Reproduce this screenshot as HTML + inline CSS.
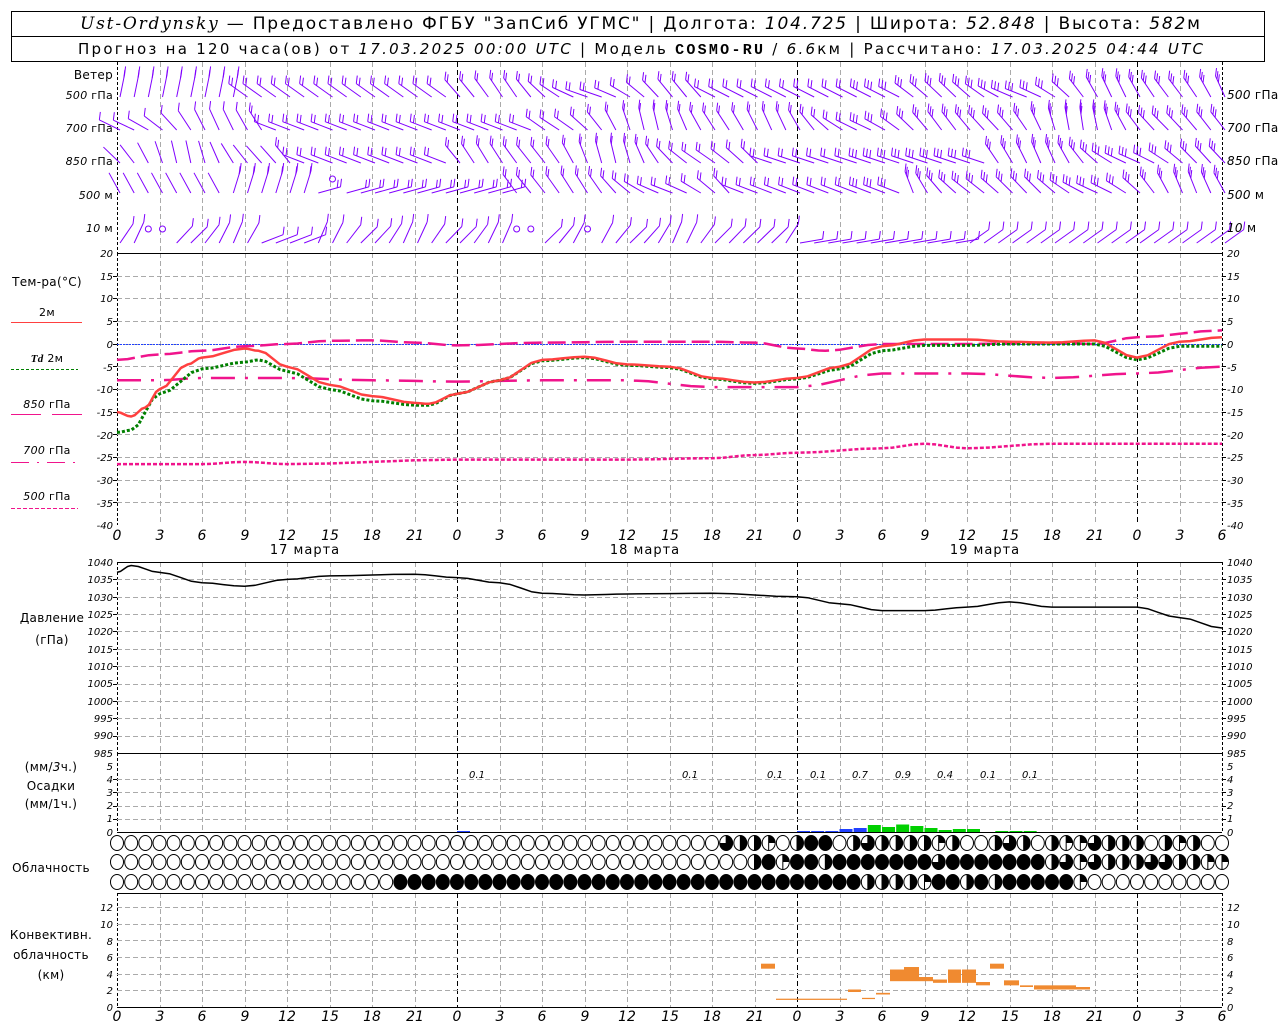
<!DOCTYPE html>
<html><head><meta charset="utf-8"><style>
html,body{margin:0;padding:0;background:#fff;}
svg{display:block;}
text{font-family:"DejaVu Sans","Liberation Sans",sans-serif;fill:#000;}
.ax{font-size:10px;font-style:italic;font-family:"DejaVu Sans","Liberation Sans",sans-serif;}
.lb{font-size:12px;letter-spacing:0.3px;}
.hr{font-size:14px;font-style:italic;font-family:"DejaVu Sans","Liberation Sans",sans-serif;}
</style></head><body>
<svg id="s" width="1280" height="1024" viewBox="0 0 1280 1024" xmlns="http://www.w3.org/2000/svg">
<g id="grid"></g>
<g id="data"></g>
<rect x="11.5" y="11.5" width="1253" height="50" fill="none" stroke="#000"/>
<line x1="11" y1="36.5" x2="1265" y2="36.5" stroke="#000"/>
<text x="80" y="29" font-size="17" textLength="1120" lengthAdjust="spacing"><tspan font-style="italic" font-family="DejaVu Serif,Liberation Serif,serif">Ust-Ordynsky</tspan> — Предоставлено ФГБУ "ЗапСиб УГМС" | Долгота: <tspan font-style="italic">104.725</tspan> | Широта: <tspan font-style="italic">52.848</tspan> | Высота: <tspan font-style="italic">582</tspan>м</text>
<text x="78" y="54" font-size="15" textLength="1125" lengthAdjust="spacing">Прогноз на 120 часа(ов) от <tspan font-style="italic">17.03.2025 00:00 UTC</tspan> | Модель <tspan font-weight="bold" font-family="Liberation Mono,monospace">COSMO-RU</tspan> / <tspan font-style="italic">6.6</tspan>км | Рассчитано: <tspan font-style="italic">17.03.2025 04:44 UTC</tspan></text>

<g class="lb" text-anchor="end">
<text x="113" y="79">Ветер</text>
<text x="113" y="99" font-size="11"><tspan font-style="italic">500</tspan> гПа</text>
<text x="113" y="132" font-size="11"><tspan font-style="italic">700</tspan> гПа</text>
<text x="113" y="165" font-size="11"><tspan font-style="italic">850</tspan> гПа</text>
<text x="113" y="199" font-size="11"><tspan font-style="italic">500</tspan> м</text>
<text x="113" y="232" font-size="11"><tspan font-style="italic">10</tspan>   м</text>
</g>
<g class="lb" font-size="11">
<text x="1227" y="99"><tspan font-style="italic">500</tspan> гПа</text>
<text x="1227" y="132"><tspan font-style="italic">700</tspan> гПа</text>
<text x="1227" y="165"><tspan font-style="italic">850</tspan> гПа</text>
<text x="1227" y="199"><tspan font-style="italic">500</tspan> м</text>
<text x="1227" y="232"><tspan font-style="italic">10</tspan>   м</text>
</g>
<g class="lb" text-anchor="middle">
<text x="47" y="286">Тем-ра(°С)</text>
<text x="47" y="316" font-size="11">2м</text>
<text x="47" y="362" font-size="11"><tspan font-style="italic" font-weight="bold" font-family="Liberation Serif,serif">Td</tspan>  2м</text>
<text x="47" y="408" font-size="11"><tspan font-style="italic">850</tspan> гПа</text>
<text x="47" y="454" font-size="11"><tspan font-style="italic">700</tspan> гПа</text>
<text x="47" y="500" font-size="11"><tspan font-style="italic">500</tspan> гПа</text>
<text x="52" y="622">Давление</text>
<text x="52" y="644">(гПа)</text>
<text x="51" y="771">(мм/<tspan font-style="italic">3</tspan>ч.)</text>
<text x="51" y="790">Осадки</text>
<text x="51" y="808">(мм/1ч.)</text>
<text x="51" y="872">Облачность</text>
<text x="51" y="939">Конвективн.</text>
<text x="51" y="959">облачность</text>
<text x="51" y="979">(км)</text>
</g>
<line x1="11" y1="322.5" x2="82" y2="322.5" stroke="#ff4040"/>
<line x1="11" y1="369.5" x2="78" y2="369.5" stroke="#008000" stroke-dasharray="3,2"/>
<line x1="11" y1="414.5" x2="41" y2="414.5" stroke="#f0148c"/><line x1="52" y1="414.5" x2="82" y2="414.5" stroke="#f0148c"/>
<line x1="11" y1="462.5" x2="78" y2="462.5" stroke="#f0148c" stroke-dasharray="18,8,2,8"/>
<line x1="11" y1="508.5" x2="78" y2="508.5" stroke="#f0148c" stroke-dasharray="4,2"/>

<g class="ax" text-anchor="end">
<text x="113" y="257">20</text><text x="113" y="280">15</text><text x="113" y="302">10</text><text x="113" y="325">5</text><text x="113" y="348">0</text><text x="113" y="371">-5</text><text x="113" y="393">-10</text><text x="113" y="416">-15</text><text x="113" y="439">-20</text><text x="113" y="461">-25</text><text x="113" y="484">-30</text><text x="113" y="507">-35</text><text x="113" y="529">-40</text>
<text x="113" y="566">1040</text><text x="113" y="583">1035</text><text x="113" y="601">1030</text><text x="113" y="618">1025</text><text x="113" y="635">1020</text><text x="113" y="653">1015</text><text x="113" y="670">1010</text><text x="113" y="687">1005</text><text x="113" y="705">1000</text><text x="113" y="722">995</text><text x="113" y="739">990</text><text x="113" y="757">985</text>
<text x="113" y="770">5</text><text x="113" y="783">4</text><text x="113" y="796">3</text><text x="113" y="809">2</text><text x="113" y="822">1</text><text x="113" y="836">0</text>
<text x="113" y="911">12</text><text x="113" y="928">10</text><text x="113" y="945">8</text><text x="113" y="961">6</text><text x="113" y="978">4</text><text x="113" y="994">2</text><text x="113" y="1011">0</text>
</g>
<g class="ax">
<text x="1227" y="257">20</text><text x="1227" y="280">15</text><text x="1227" y="302">10</text><text x="1227" y="325">5</text><text x="1227" y="348">0</text><text x="1227" y="371">-5</text><text x="1227" y="393">-10</text><text x="1227" y="416">-15</text><text x="1227" y="439">-20</text><text x="1227" y="461">-25</text><text x="1227" y="484">-30</text><text x="1227" y="507">-35</text><text x="1227" y="529">-40</text>
<text x="1227" y="566">1040</text><text x="1227" y="583">1035</text><text x="1227" y="601">1030</text><text x="1227" y="618">1025</text><text x="1227" y="635">1020</text><text x="1227" y="653">1015</text><text x="1227" y="670">1010</text><text x="1227" y="687">1005</text><text x="1227" y="705">1000</text><text x="1227" y="722">995</text><text x="1227" y="739">990</text><text x="1227" y="757">985</text>
<text x="1227" y="770">5</text><text x="1227" y="783">4</text><text x="1227" y="796">3</text><text x="1227" y="809">2</text><text x="1227" y="822">1</text><text x="1227" y="836">0</text>
<text x="1227" y="911">12</text><text x="1227" y="928">10</text><text x="1227" y="945">8</text><text x="1227" y="961">6</text><text x="1227" y="978">4</text><text x="1227" y="994">2</text><text x="1227" y="1011">0</text>
</g>
<g class="hr" text-anchor="middle">
<text x="117" y="540">0</text><text x="160" y="540">3</text><text x="202" y="540">6</text><text x="245" y="540">9</text><text x="287" y="540">12</text><text x="330" y="540">15</text><text x="372" y="540">18</text><text x="415" y="540">21</text><text x="457" y="540">0</text><text x="500" y="540">3</text><text x="542" y="540">6</text><text x="585" y="540">9</text><text x="627" y="540">12</text><text x="670" y="540">15</text><text x="712" y="540">18</text><text x="755" y="540">21</text><text x="797" y="540">0</text><text x="840" y="540">3</text><text x="882" y="540">6</text><text x="925" y="540">9</text><text x="967" y="540">12</text><text x="1010" y="540">15</text><text x="1052" y="540">18</text><text x="1095" y="540">21</text><text x="1137" y="540">0</text><text x="1180" y="540">3</text><text x="1222" y="540">6</text>
<text x="117" y="1021">0</text><text x="160" y="1021">3</text><text x="202" y="1021">6</text><text x="245" y="1021">9</text><text x="287" y="1021">12</text><text x="330" y="1021">15</text><text x="372" y="1021">18</text><text x="415" y="1021">21</text><text x="457" y="1021">0</text><text x="500" y="1021">3</text><text x="542" y="1021">6</text><text x="585" y="1021">9</text><text x="627" y="1021">12</text><text x="670" y="1021">15</text><text x="712" y="1021">18</text><text x="755" y="1021">21</text><text x="797" y="1021">0</text><text x="840" y="1021">3</text><text x="882" y="1021">6</text><text x="925" y="1021">9</text><text x="967" y="1021">12</text><text x="1010" y="1021">15</text><text x="1052" y="1021">18</text><text x="1095" y="1021">21</text><text x="1137" y="1021">0</text><text x="1180" y="1021">3</text><text x="1222" y="1021">6</text>
</g>
<g font-size="13" text-anchor="middle" letter-spacing="1">
<text x="305" y="554">17 марта</text><text x="645" y="554">18 марта</text><text x="985" y="554">19 марта</text>
</g>
<g class="ax" font-size="12" text-anchor="middle">
<text x="477" y="778">0.1</text><text x="690" y="778">0.1</text><text x="775" y="778">0.1</text><text x="818" y="778">0.1</text><text x="860" y="778">0.7</text><text x="903" y="778">0.9</text><text x="945" y="778">0.4</text><text x="988" y="778">0.1</text><text x="1030" y="778">0.1</text>
</g>
</svg>
<script>
(function(){
var NS="http://www.w3.org/2000/svg",G=document.getElementById('grid'),D=document.getElementById('data');
function X(h){return 117+h*340/24;}
function el(p,t,a){var e=document.createElementNS(NS,t);for(var k in a)e.setAttribute(k,a[k]);p.appendChild(e);return e;}
function ln(p,x1,y1,x2,y2,c,da,w){var a={x1:x1,y1:y1,x2:x2,y2:y2,stroke:c,'stroke-width':w||1};if(da)a['stroke-dasharray']=da;return el(p,'line',a);}
var P=[[62,253],[253,525],[562,753],[753,832],[893,1007]];
P.forEach(function(p){
 for(var h=3;h<78;h+=3){var x=Math.round(X(h))+.5;ln(G,x,p[0],x,p[1],h%24?'#aaa':'#000','5,3');}
 ln(G,117.5,p[0],117.5,p[1],'#000','3,2');ln(G,1222.5,p[0],1222.5,p[1],'#000','3,2');
});
function hg(top,bot,n){for(var i=1;i<n;i++){var y=Math.round(top+(bot-top)*i/n)+.5;ln(G,117,y,1222,y,'#aaa','5,3');ln(G,113,y,117,y,'#000');ln(G,1222,y,1226,y,'#000');}}
hg(253,525,12);hg(562,753,11);hg(766,832,5);
for(var k=1;k<=6;k++){var y=Math.round(1007-k*16.67)+.5;ln(G,117,y,1222,y,'#aaa','5,3');}
[253,562,753,832,893,1007].forEach(function(y){ln(G,117,y+.5,1222,y+.5,'#000');});
ln(G,117,344.5,1222,344.5,'#2040ff','2,1');
function curve(pts,f,c,w,da){var d='';pts.forEach(function(p,i){d+=(i?'L':'M')+X(p[0]).toFixed(1)+','+f(p[1]).toFixed(1);});var a={d:d,fill:'none',stroke:c,'stroke-width':w,'stroke-linejoin':'round'};if(da)a['stroke-dasharray']=da;el(D,'path',a);}
function interp(k){var o=[];for(var i=0;i<k.length-1;i++){var a=k[i],b=k[i+1];for(var t=0;t<1;t+=.25){var s=(1-Math.cos(Math.PI*t))/2;o.push([a[0]+(b[0]-a[0])*t,a[1]+(b[1]-a[1])*s]);}}o.push(k[k.length-1]);return o;}
function TY(v){return 344-v*4.533;}
function PY(v){return 562+(1040-v)*3.473;}
curve(interp([[0,-26.5],[6,-26.5],[9,-26],[12,-26.5],[24,-25.5],[36,-25.5],[42,-25.2],[45,-24.5],[48,-24],[54,-23],[57,-22],[60,-23],[66,-22],[72,-22],[78,-22]]),TY,'#f0148c',2.5,'4,2');
curve(interp([[0,-8],[3,-8],[6,-7.5],[12,-7.5],[18,-8],[24,-8.3],[30,-8],[36,-8],[42,-9.5],[48,-9.5],[54,-6.5],[60,-6.5],[66,-7.5],[72,-6.5],[78,-5]]),TY,'#f0148c',2.5,'24,10,3,10');
curve(interp([[0,-3.5],[3,-2.3],[6,-1.5],[9,-0.5],[12,0],[15,0.7],[18,0.8],[21,0.3],[24,-0.3],[30,0.3],[36,0.5],[42,0.5],[45,0.3],[48,-1],[50,-1.5],[54,0],[60,0],[66,0.3],[69,0],[72,1.5],[78,3]]),TY,'#f0148c',2.5,'18,6');
curve(interp([[0,-19.5],[1,-19],[3,-11],[6,-5.5],[9,-4],[10,-3.5],[12,-6],[15,-10],[18,-12.5],[21,-13.5],[22,-13.5],[24,-11],[27,-8],[30,-3.7],[33,-3],[36,-4.7],[39,-5.2],[42,-7.7],[45,-8.7],[48,-7.7],[51,-5.5],[54,-1.5],[57,-0.3],[60,-0.3],[63,0],[66,0],[69,0],[72,-3.5],[75,-0.5],[78,-0.5]]),TY,'#008000',3,'3,2');
curve(interp([[0,-15],[1,-16],[2,-14],[3,-10],[5,-4.5],[6,-3],[9,-1],[10,-1.5],[12,-5],[15,-9],[18,-11.5],[21,-13],[22,-13.2],[24,-11],[27,-8],[30,-3.5],[33,-2.8],[36,-4.5],[39,-5],[42,-7.5],[45,-8.5],[48,-7.5],[51,-5],[54,-0.5],[57,1],[60,1],[63,0.5],[66,0.3],[69,0.8],[72,-3],[75,0.5],[78,1.5]]),TY,'#ff4040',2.5);
curve(interp([[0,1037],[1,1039],[3,1037],[6,1034],[9,1033],[12,1035],[15,1036],[21,1036.5],[24,1035.5],[27,1034],[30,1031],[33,1030.5],[36,1030.8],[42,1031],[48,1030],[51,1028],[54,1026],[57,1026],[60,1027],[63,1028.5],[66,1027],[72,1027],[75,1024],[78,1021]]),PY,'#000',1.5);
var pb=[[24,1,'#2040ff'],[48,1,'#2040ff'],[49,1,'#2040ff'],[50,1,'#2040ff'],[51,3,'#2040ff'],[52,4,'#2040ff'],[53,7,'#00d000'],[54,5,'#00d000'],[55,7.5,'#00d000'],[56,6,'#00d000'],[57,4,'#00d000'],[58,2,'#00d000'],[59,3,'#00d000'],[60,3,'#00d000'],[62,1,'#00d000'],[63,1,'#00d000'],[64,1,'#00d000']];
pb.forEach(function(b){el(D,'rect',{x:X(b[0]),y:832-b[1],width:13,height:b[1],fill:b[2]});});
var cb=[[761,775,5.2,4.6],[776,847,1.0,0.85],[848,861,2.1,1.8],[862,875,1.1,0.95],[876,890,1.7,1.5],[890,904,4.5,3.1],[904,919,4.8,3.1],[919,933,3.6,3.1],[933,947,3.3,2.9],[948,961,4.5,2.9],[962,976,4.5,2.9],[976,990,3.0,2.6],[990,1004,5.2,4.6],[1004,1019,3.2,2.6],[1020,1033,2.6,2.4],[1034,1076,2.6,2.1],[1076,1090,2.4,2.1]];
cb.forEach(function(b){var y1=1007-b[2]*8.33,y2=1007-b[3]*8.33;el(D,'rect',{x:b[0],y:y1,width:b[1]-b[0],height:Math.max(1,y2-y1),fill:'#f08a30'});});
function rowc(spec){var a=[];for(var h=0;h<=78;h++)a.push(0);spec.forEach(function(s){for(var h=s[0];h<=s[1];h++)a[h]=s[2];});return a;}
var r1=rowc([[43,43,3],[44,45,2],[46,46,1],[48,48,2],[49,50,4],[52,57,2],[53,53,3],[58,58,1],[59,59,2],[62,62,2],[63,63,3],[64,64,2],[66,66,2],[67,68,1],[69,69,3],[70,72,2],[74,74,2],[75,75,1],[76,76,2]]);
var r2=rowc([[45,45,2],[46,46,4],[47,47,1],[48,49,4],[50,50,2],[51,57,4],[58,58,3],[59,65,4],[66,66,2],[67,67,3],[68,68,1],[69,69,3],[70,72,2],[73,74,3],[75,76,2],[77,78,1]]);
var r3=rowc([[20,67,4],[53,53,2],[54,55,2],[56,56,2],[57,57,1],[60,60,2],[62,62,2],[68,68,1]]);
[[843,r1],[862,r2],[882,r3]].forEach(function(R){var cy=R[0];R[1].forEach(function(v,h){var cx=X(h),r=6.5;
 el(D,'ellipse',{cx:cx,cy:cy,rx:r,ry:r+1,fill:v==4?'#000':'#fff',stroke:'#000','stroke-width':1});
 if(v>0&&v<4){var ang=v*Math.PI/2,x2=cx+r*Math.sin(ang),y2=cy-(r+1)*Math.cos(ang);
  el(D,'path',{d:'M'+cx+','+cy+'L'+cx+','+(cy-r-1)+'A'+r+','+(r+1)+' 0 '+(v>2?1:0)+' 1 '+x2.toFixed(1)+','+y2.toFixed(1)+'Z',fill:'#000'});
  ln(D,cx,cy-r-1,cx,cy+r+1,'#000');}
});});
var W=document.createElementNS(NS,'g');D.appendChild(W);
var rows=[[97,0],[130,1],[163,2],[193,3],[243,4]];
function dir(r,h){
 var base=[0.75,0.65,0.7,0.7,-0.8][r];
 var v=base+0.3*Math.sin(h*0.23+r*1.7)+0.2*Math.sin(h*0.61+r);
 if(r==0&&h<9)v=-0.2;
 if(r==0&&h>=9&&h<24)v=0.95; if(r==0&&h>=42&&h<56)v=1.1;
 if(r==1&&h>=11&&h<30)v=1.2; if(r==2&&h>=13&&h<24)v=1.2; if(r==2&&h>=46&&h<62)v=1.25;
 if(r==3&&h<8)v=0.5; if(r==3&&h>=8&&h<14)v=-0.3; if(r==3&&h>=14&&h<28)v=-1.3; if(r==3&&h>=44&&h<56)v=1.2;
 if(r==4){v=-0.6+0.2*Math.sin(h);if(h>=10&&h<14)v=-1.2;if(h>=44&&h<47)v=-0.8;if(h>=48&&h<60)v=-1.4;if(h>=60)v=-0.95;}
 return v;}
function nf(r,h){var n=[2,2,2,2,1][r];if(r==1&&h<10)n=1;if(r==2&&h<12)n=0;if(r==3&&h<8)n=0;if(h>52&&r<4)n=3;if(r==4&&(h==2||h==3||h==28||h==29||h==33))return -1;if(r==3&&h==15)return -1;return n;}
rows.forEach(function(R){var yb=R[0],r=R[1];for(var h=0;h<=78;h++){
 var x=X(h)+3,a=dir(r,h),n=nf(r,h);
 if(n<0){el(W,'circle',{cx:x,cy:yb-14,r:3,fill:'none',stroke:'#8000ff'});continue;}
 var L=23,tx=x-L*Math.sin(a),ty=yb-L*Math.cos(a);
 ln(W,x,yb,tx,ty,'#8000ff');
 for(var i=0;i<n;i++){var fx=tx+(x-tx)*i*0.15,fy=ty+(yb-ty)*i*0.15;ln(W,fx,fy,fx+1,fy-8,'#8000ff');}
}});
})();
</script>
</body></html>
